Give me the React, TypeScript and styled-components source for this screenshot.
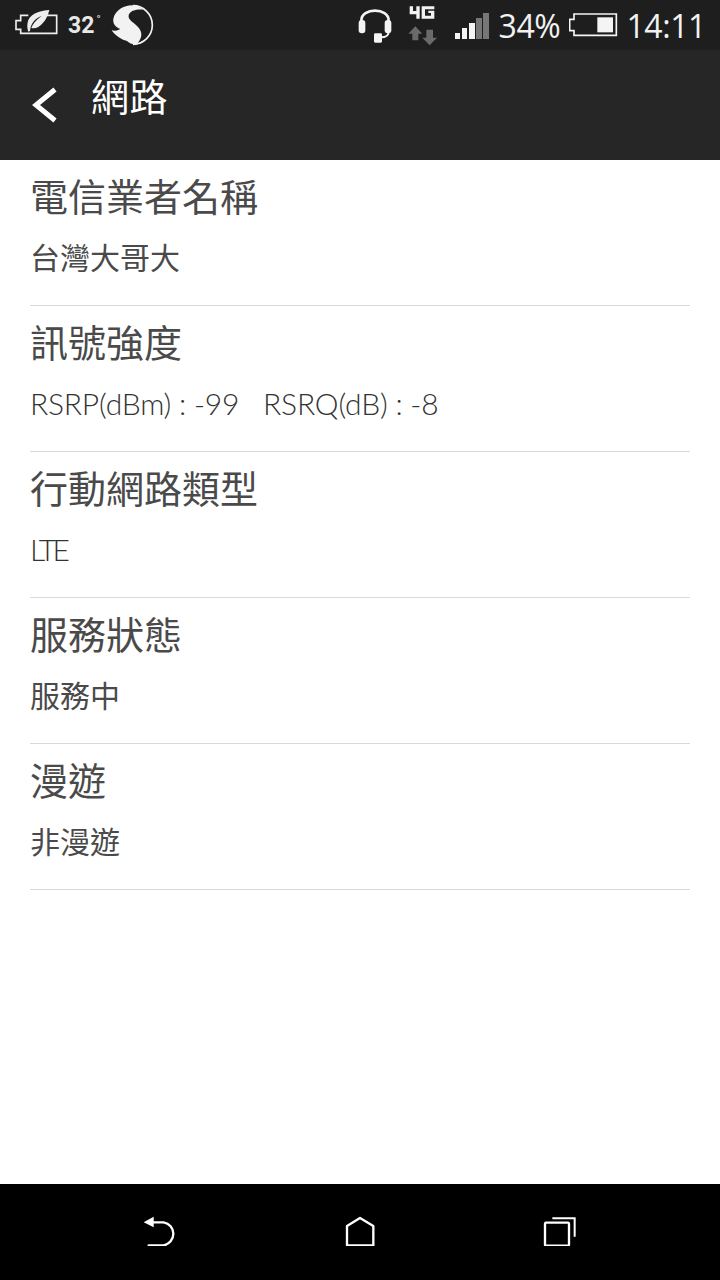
import React from "react";
import styled, { createGlobalStyle } from "styled-components";

const Global = createGlobalStyle`
  html, body { margin: 0; padding: 0; background: #fff; }
  #root { width: 720px; height: 1280px; }
`;
const CJK = `"Noto Sans CJK TC", "Noto Sans CJK SC", sans-serif`;

const Screen = styled.div`
  width: 720px; height: 1280px; display: flex; flex-direction: column; background: #fff; overflow: hidden;
`;
const StatusBar = styled.div`
  height: 50px; background: #1e1e1e; display: flex; align-items: center; justify-content: space-between; flex: none;
`;
const LeftCluster = styled.div`
  display: flex; align-items: center; padding-left: 15px;
`;
const RightCluster = styled.div`
  display: flex; align-items: center; padding-right: 14px;
`;
const Temp = styled.span`
  font: 700 23px "Roboto", sans-serif; color: #e8e8e8; margin-left: 9px; width: 34px; display: flex;
  margin-right: 9px;
`;
const Deg = styled.span`
  font-size: 11px; line-height: 1; margin: 2px 0 0 2px; font-weight: 400;
`;
const StatusText = styled.span<{ $ml: number }>`
  font: 400 32px "Open Sans", sans-serif; color: #f2f2f2; margin-left: ${p => p.$ml}px; letter-spacing: -0.4px;
`;
const Icon = styled.svg<{ $ml?: number }>`
  display: block; flex: none; margin-left: ${p => p.$ml ?? 0}px;
`;
const Header = styled.div`
  height: 110px; background: #262626; display: flex; align-items: flex-start; flex: none; padding: 20px 0 0 32px; box-sizing: border-box;
`;
const BackBtn = styled.div`
  margin-top: 17px; width: 26px; height: 36px; display: flex;
`;
const HeaderTitle = styled.div`
  font: 400 38px/50px ${CJK}; color: #fff; margin-left: 33px; letter-spacing: 0.5px;
`;
const List = styled.div`
  flex: 1; padding: 0 30px;
`;
const Row = styled.div`
  height: 146px; box-sizing: border-box; border-bottom: 1px solid #d9d9d9; padding-top: 10px;
`;
const Title = styled.div`
  font: 400 38px/50px ${CJK}; color: #4a4a4a;
`;
const Value = styled.div`
  font: 400 30px/40px ${CJK}; color: #4a4a4a; margin-top: 16px; white-space: pre;
`;
const LatinValue = styled.div<{ $track: number }>`
  font: 300 30px/40px "Lato", ${CJK}; color: #333; margin-top: 17px; white-space: pre;
  letter-spacing: ${p => p.$track}px;
`;
const NavBar = styled.div`
  height: 96px; background: #000; display: grid; grid-template-columns: repeat(3, 200px); justify-content: center; flex: none; padding-top: 30px; box-sizing: border-box;
`;
const NavCell = styled.div`
  display: flex; justify-content: center; height: 34px;
`;

const Leaf = () => (
  <Icon width="44" height="40" viewBox="15 15 132 120" fill="none">
    <path d="M55 46H32V62H18V88H32V100H140V46H105" stroke="#eee" strokeWidth="5" />
    <path d="M118 30C95 32 65 38 55 60C50 75 52 85 55 95L60 93C62 70 75 55 95 48C78 60 68 72 64 84C85 90 110 65 118 30Z" fill="#eee" />
  </Icon>
);
const Snapdragon = () => (
  <Icon width="44" height="44" viewBox="32 8 132 132" fill="none">
    <path d="M98 16A58 58 0 0 1 98 132" stroke="#f2f2f2" strokeWidth="5" />
    <path d="M95 15C70 15 45 30 39 55C37 70 45 80 60 86C50 92 42 92 34 90C45 106 62 118 80 122C85 128 95 132 108 133C122 118 130 100 115 82C100 65 82 60 85 45C88 32 105 25 130 28C118 20 108 15 95 15Z" fill="#f2f2f2" />
  </Icon>
);
const Headset = () => (
  <Icon width="36" height="36" viewBox="15 21 108 108" fill="none">
    <path d="M28 70V62C28 42 48 32 69 32C90 32 110 42 110 62V70" stroke="#f4f4f4" strokeWidth="8" />
    <rect x="20" y="60" width="20" height="40" rx="9" fill="#f4f4f4" />
    <rect x="98" y="60" width="20" height="40" rx="9" fill="#f4f4f4" />
    <path d="M110 98C108 108 100 112 88 112" stroke="#f4f4f4" strokeWidth="6" />
    <rect x="66" y="100" width="24" height="28" rx="4" fill="#f4f4f4" />
  </Icon>
);
const Net = () => (
  <Icon $ml={14} width="30" height="45" viewBox="170 8 90 135">
    <path d="M178 18H188V32H198V18H208V55H198V42H178Z" fill="#f2f2f2" />
    <path d="M214 18H252V27H224V46H242V38H234V31H252V55H214Z" fill="#f2f2f2" />
    <path d="M195 78L216 100H204V120H186V100H174Z" fill="#6a6a6a" />
    <path d="M238 135L260 112H248V88H228V112H216Z" fill="#6a6a6a" />
  </Icon>
);
const Signal = () => (
  <Icon $ml={18} width="34" height="30" viewBox="0 0 34 30">
    <rect x="0" y="23" width="5" height="6" fill="#f4f4f4" />
    <rect x="7" y="18" width="5" height="11" fill="#f4f4f4" />
    <rect x="14" y="13" width="6" height="16" fill="#f4f4f4" />
    <rect x="21" y="8" width="6" height="21" fill="#777" />
    <rect x="28" y="3" width="6" height="26" fill="#777" />
  </Icon>
);
const Battery = () => (
  <Icon $ml={9} width="50" height="30" viewBox="690 30 150 90" fill="none">
    <path d="M705 42V58H692V92H705V106H832V42Z" stroke="#f4f4f4" strokeWidth="5" />
    <rect x="775" y="52" width="47" height="45" fill="#f4f4f4" />
  </Icon>
);
const Chevron = () => (
  <Icon width="26" height="36" viewBox="0 0 26 36" fill="none">
    <path d="M23 2.500 L4 18 L23 33.500" stroke="#fff" strokeWidth="5" />
  </Icon>
);
const NavBack = () => (
  <Icon width="36" height="32" viewBox="125 72 108 96" fill="none">
    <path d="M155 97H190A35 35 0 0 1 190 166H145" stroke="#fff" strokeWidth="7" strokeLinecap="round" />
    <path d="M130 97L160 80V112Z" fill="#fff" />
  </Icon>
);
const NavHome = () => (
  <Icon width="30" height="32" viewBox="735 72 90 96" fill="none">
    <path d="M741 166V108L780 84L820 108V166Z" stroke="#fff" strokeWidth="7" strokeLinejoin="round" />
  </Icon>
);
const NavRecent = () => (
  <Icon width="34" height="32" viewBox="1330 72 102 96" fill="none">
    <rect x="1336" y="98" width="72" height="69" rx="3" stroke="#fff" strokeWidth="7" />
    <path d="M1358 85H1425V140" stroke="#fff" strokeWidth="6" />
  </Icon>
);

type RowData = { title: string; value: string; track?: number };
const ROWS: RowData[] = [
  { title: "電信業者名稱", value: "台灣大哥大" },
  { title: "訊號強度", value: "RSRP(dBm) : -99   RSRQ(dB) : -8", track: -0.2 },
  { title: "行動網路類型", value: "LTE", track: -3.5 },
  { title: "服務狀態", value: "服務中" },
  { title: "漫遊", value: "非漫遊" },
];

export default function App() {
  return (
    <Screen>
      <Global />
      <StatusBar>
        <LeftCluster>
          <Leaf />
          <Temp>32<Deg>°</Deg></Temp>
          <Snapdragon />
        </LeftCluster>
        <RightCluster>
          <Headset />
          <Net />
          <Signal />
          <StatusText $ml={10}>34%</StatusText>
          <Battery />
          <StatusText $ml={7}>14:11</StatusText>
        </RightCluster>
      </StatusBar>
      <Header>
        <BackBtn><Chevron /></BackBtn>
        <HeaderTitle>網路</HeaderTitle>
      </Header>
      <List>
        {ROWS.map(r => (
          <Row key={r.title}>
            <Title>{r.title}</Title>
            {r.track === undefined ? <Value>{r.value}</Value> : <LatinValue $track={r.track}>{r.value}</LatinValue>}
          </Row>
        ))}
      </List>
      <NavBar>
        <NavCell><NavBack /></NavCell>
        <NavCell><NavHome /></NavCell>
        <NavCell><NavRecent /></NavCell>
      </NavBar>
    </Screen>
  );
}
